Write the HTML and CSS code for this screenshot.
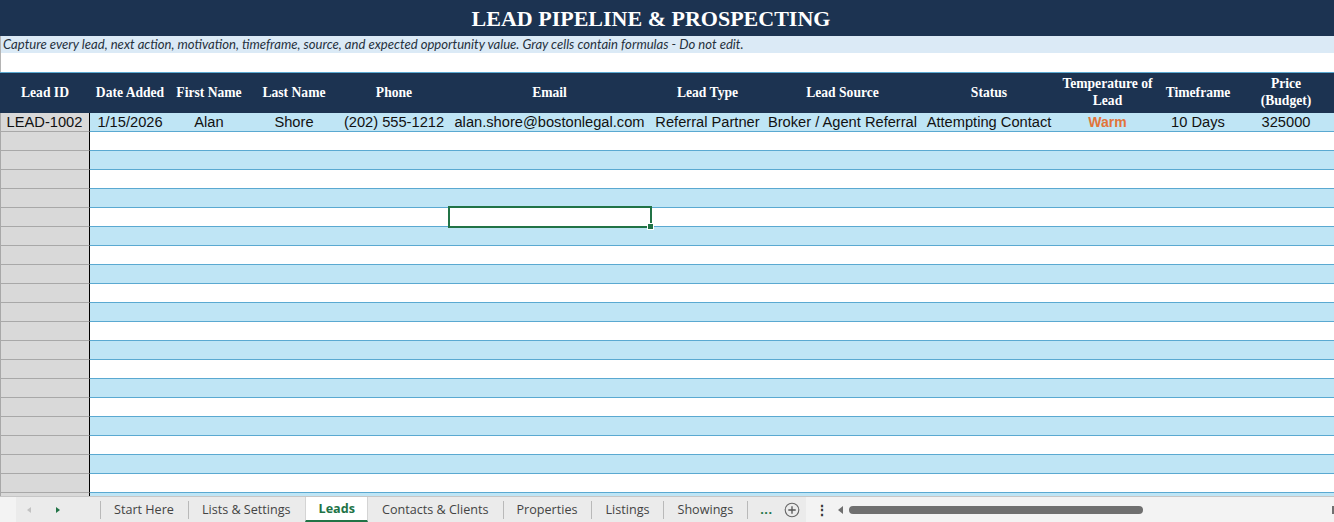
FILE: index.html
```html
<!DOCTYPE html>
<html lang="en">
<head>
  <meta charset="UTF-8">
  <title>Lead Pipeline &amp; Prospecting</title>
  <link rel="stylesheet" href="styles.css">
</head>
<body>
  <div class="sheet">
    <div class="title">LEAD PIPELINE &amp; PROSPECTING</div>
    <div class="note">Capture every lead, next action, motivation, timeframe, source, and expected opportunity value. Gray cells contain formulas - Do not edit.</div>
    <div class="gap"></div>

    <div class="row head">
      <div class="c">Lead ID</div>
      <div class="c">Date Added</div>
      <div class="c">First Name</div>
      <div class="c">Last Name</div>
      <div class="c">Phone</div>
      <div class="c">Email</div>
      <div class="c">Lead Type</div>
      <div class="c">Lead Source</div>
      <div class="c">Status</div>
      <div class="c">Temperature of<br>Lead</div>
      <div class="c">Timeframe</div>
      <div class="c">Price<br>(Budget)</div>
    </div>

    <div class="row b">
      <div class="c id">LEAD-1002</div>
      <div class="c">1/15/2026</div>
      <div class="c">Alan</div>
      <div class="c">Shore</div>
      <div class="c">(202) 555-1212</div>
      <div class="c">alan.shore@bostonlegal.com</div>
      <div class="c">Referral Partner</div>
      <div class="c">Broker / Agent Referral</div>
      <div class="c">Attempting Contact</div>
      <div class="c warm">Warm</div>
      <div class="c">10 Days</div>
      <div class="c">325000</div>
    </div>

    <div id="rows"></div>
  </div>

  <div class="tabs">
    <div class="nav">
      <span class="arr left"></span>
      <span class="arr right"></span>
    </div>
    <div class="strip">
      <div class="tab">Start Here</div>
      <div class="tab">Lists &amp; Settings</div>
      <div class="tab active">Leads</div>
      <div class="tab">Contacts &amp; Clients</div>
      <div class="tab">Properties</div>
      <div class="tab">Listings</div>
      <div class="tab last">Showings</div>
      <div class="more">...</div>
      <div class="add">
        <svg width="16" height="16" viewBox="0 0 16 16">
          <circle cx="8" cy="8" r="6.8" fill="none" stroke="#666" stroke-width="1.1"/>
          <path d="M8 4.3v7.4M4.3 8h7.4" stroke="#555" stroke-width="1.3"/>
        </svg>
      </div>
    </div>
    <div class="dots">&#8942;</div>
    <div class="scroll">
      <span class="sarr"></span>
      <span class="thumb"></span>
      <span class="end"></span>
    </div>
  </div>

  <script>
    // empty rows under the first lead, banded like the table style
    const rows = document.getElementById("rows");
    for (let r = 2; r <= 21; r++) {
      const row = document.createElement("div");
      row.className = r % 2 ? "row b" : "row";
      for (let c = 0; c < 12; c++) {
        const cell = document.createElement("div");
        cell.className = c === 0 ? "c id" : "c";
        if (r === 6 && c === 5) cell.classList.add("sel");
        row.appendChild(cell);
      }
      rows.appendChild(row);
    }
  </script>
</body>
</html>
```

FILE: styles.css
```css
body {
  margin: 0;
  background: #fff;
  font-family: 'Liberation Sans', Arial, sans-serif;
  overflow: hidden;
}

.sheet {
  height: 496px;
  overflow: hidden;
}

.title {
  height: 36px;
  background: #1c3351;
  color: #fff;
  font-family: 'Liberation Serif', serif;
  font-weight: bold;
  font-size: 22px;
  line-height: 37px;
  text-align: center;
  padding-right: 32px;
}

.note {
  height: 17px;
  background: #dbeaf6;
  color: #26313d;
  font-family: Lato, sans-serif;
  font-style: italic;
  font-size: 13.1px;
  line-height: 17px;
  padding-left: 3px;
  box-shadow: inset 1px 0 0 #b4b4b4;
  white-space: nowrap;
}

.gap {
  height: 19px;
  border-bottom: 1px solid #5aa9d1;
  box-shadow: inset 1px 0 0 #b4b4b4;
}

.row {
  display: grid;
  grid-template-columns: 90px 80px 78px 92px 108px 203px 113px 157px 136px 101px 80px 96px;
  height: 19px;
}

.c {
  box-sizing: border-box;
  border-bottom: 1px solid #5aa9d1;
  font-size: 14.67px;
  line-height: 18px;
  color: #111;
  text-align: center;
  white-space: nowrap;
  overflow: hidden;
}

.row.b .c {
  background: #bfe5f5;
}

.row .c.id {
  background: #d9d9d9;
  border-bottom-color: #a8a8a8;
  border-right: 1px solid #000;
  box-shadow: inset 1px 0 0 #a8a8a8;
}

.row.head {
  height: 40px;
  background: #1c3351;
}

.head .c {
  border: none;
  color: #fff;
  font-family: 'Liberation Serif', serif;
  font-weight: bold;
  font-size: 13.6px;
  line-height: 17px;
  padding-bottom: 2px;
  display: flex;
  align-items: center;
  justify-content: center;
}

.warm {
  color: #e2743a;
  font-weight: bold;
  font-size: 14px;
}

.c.sel {
  position: relative;
  overflow: visible;
}

.c.sel::after {
  content: "";
  position: absolute;
  top: -2px;
  left: 0;
  right: -1px;
  bottom: -2px;
  border: 2px solid #217346;
}

.c.sel::before {
  content: "";
  position: absolute;
  right: -3px;
  bottom: -4px;
  width: 5px;
  height: 5px;
  background: #217346;
  border: 1px solid #fff;
  z-index: 1;
}

/* sheet tabs */
.tabs {
  display: flex;
  height: 26px;
  box-sizing: border-box;
  border-top: 1px solid #c6c6c6;
  background: #f3f3f3;
  font-family: 'Open Sans', sans-serif;
  font-size: 12.6px;
  color: #444;
}

.nav {
  width: 84px;
  margin-left: 16px;
  background: #ebebeb;
  display: flex;
  align-items: center;
}

.arr {
  width: 0;
  height: 0;
  border-top: 3.5px solid transparent;
  border-bottom: 3.5px solid transparent;
}

.arr.left {
  margin-left: 11px;
  border-right: 4px solid #c2c2c2;
}

.arr.right {
  margin-left: 25px;
  border-left: 4px solid #217346;
}

.strip {
  display: flex;
  align-items: center;
  background: #ebebeb;
}

.tab {
  padding: 0 14px 0 13px;
  border-left: 1px solid #b9b9b9;
  line-height: 18px;
}

.tab.active {
  align-self: stretch;
  background: #fff;
  color: #217346;
  font-weight: bold;
  line-height: 23px;
  padding: 0 12px 0 13px;
  border-left: 1px solid #d4d4d4;
  border-right: 1px solid #d4d4d4;
  border-bottom: 2px solid #217346;
}

.tab.active + .tab {
  border-left-color: transparent;
}

.tab.last {
  border-right: 1px solid #b9b9b9;
}

.more {
  padding: 0 12px;
  color: #217346;
  font-weight: bold;
  letter-spacing: 0.5px;
}

.add {
  display: flex;
  margin-right: 6px;
}

.dots {
  width: 32px;
  text-align: center;
  line-height: 25px;
  font-size: 14px;
  color: #333;
  font-weight: bold;
}

.scroll {
  flex: 1;
  display: flex;
  align-items: center;
}

.sarr {
  width: 0;
  height: 0;
  border-top: 4px solid transparent;
  border-bottom: 4px solid transparent;
  border-right: 5px solid #6f6f6f;
}

.thumb {
  width: 294px;
  height: 8px;
  margin-left: 6px;
  border-radius: 4px;
  background: #6f6f6f;
}

.end {
  margin-left: auto;
  width: 2px;
  height: 8px;
  background: #6f6f6f;
}
```
